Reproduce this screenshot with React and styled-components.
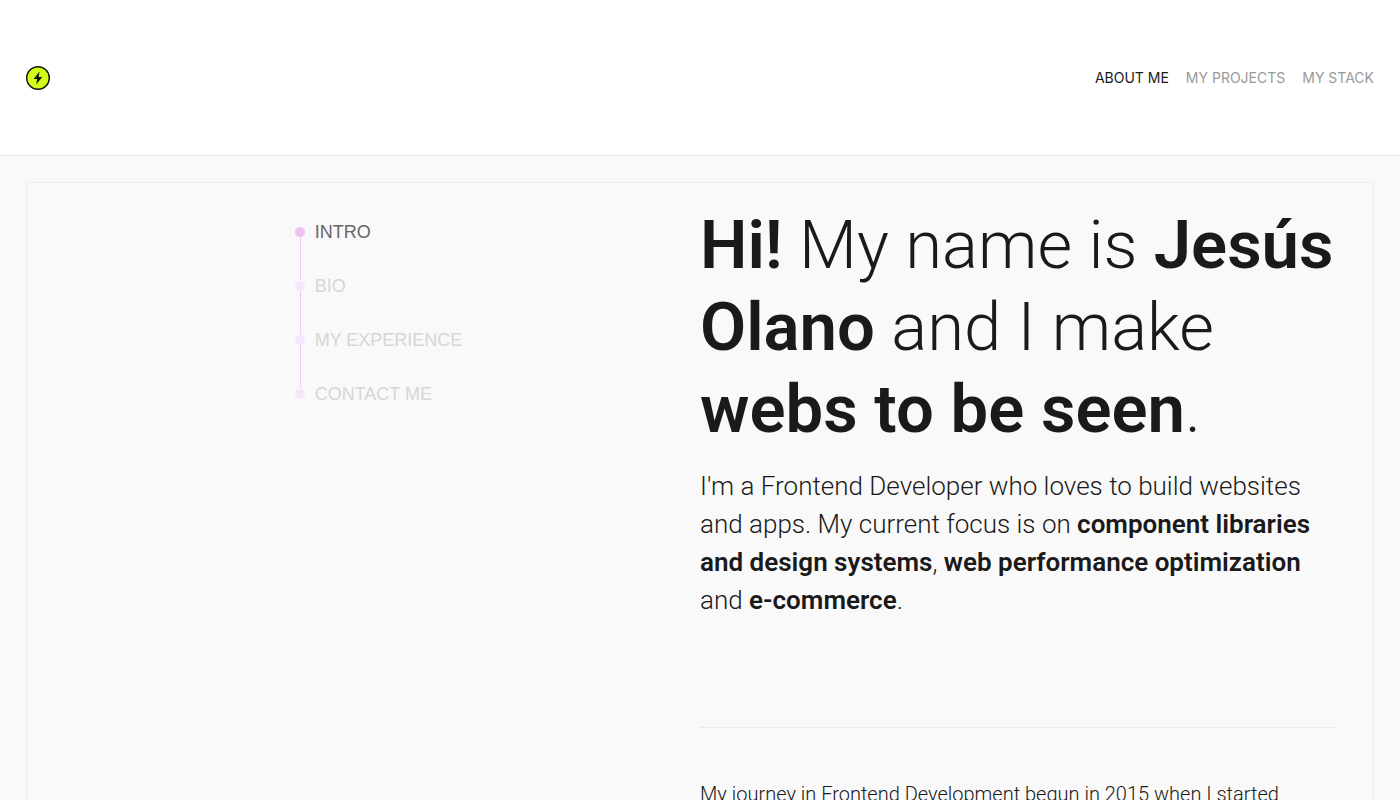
import React from 'react'
import styled, { createGlobalStyle } from 'styled-components'

const steps = [
    { id: 'intro', label: 'Intro' },
    { id: 'bio', label: 'Bio' },
    { id: 'experience', label: 'My experience' },
    { id: 'contact', label: 'Contact me' },
]

const App = () => {
    return (
        <>
            <GlobalStyle />
            <Header>
                <Logo href="#" aria-label="Home">
                    <Bolt />
                </Logo>
                <Nav>
                    <NavLink href="#about" $active>About me</NavLink>
                    <NavLink href="#projects">My projects</NavLink>
                    <NavLink href="#stack">My stack</NavLink>
                </Nav>
            </Header>

            <Main>
                <Panel>
                    <Left>
                        <Steps>
                            {steps.map((step, i) => (
                                <Step key={step.id}>
                                    <StepLink href={`#${step.id}`} $active={i === 0}>
                                        <Dot $active={i === 0} />
                                        {step.label}
                                    </StepLink>
                                    {i < steps.length - 1 && <Line />}
                                </Step>
                            ))}
                        </Steps>
                    </Left>

                    <Right>
                        <Title id="intro">
                            <b>Hi!</b> My name is <b>Jesús Olano</b> and I make <b>webs to be seen</b>.
                        </Title>
                        <Lead>
                            I'm a Frontend Developer who loves to build websites and apps. My
                            current focus is on <b>component libraries and design systems</b>,{' '}
                            <b>web performance optimization</b> and <b>e-commerce</b>.
                        </Lead>
                        <Divider />
                        <Text id="bio">
                            My journey in Frontend Development begun in 2015 when I started
                        </Text>
                    </Right>
                </Panel>
            </Main>
        </>
    )
}

export default App

const Bolt = () => (
    <svg width="24" height="24" viewBox="0 0 24 24" aria-hidden="true">
        <circle cx="12" cy="12" r="11.3" fill="#d0ff14" stroke="#111" strokeWidth="1.4" />
        <path d="M13.6 5.6 7.6 12.9h3.6l-1 5.5 6-7.4h-3.6z" fill="#111" />
    </svg>
)

const GlobalStyle = createGlobalStyle`
    * {
        box-sizing: border-box;
    }
    body {
        margin: 0;
        background: #f9f9f9;
        color: #1a1a1a;
        font-family: Roboto, 'Liberation Sans', sans-serif;
        font-weight: 300;
    }
    a {
        text-decoration: none;
    }
`

const Header = styled.header`
    display: flex;
    align-items: center;
    justify-content: space-between;
    height: 156px;
    padding: 0 26px;
    background: #fff;
    border-bottom: 1px solid #ebebeb;
`

const Logo = styled.a`
    display: flex;
`

const Nav = styled.nav`
    display: flex;
    gap: 17px;
`

const NavLink = styled.a`
    color: ${({ $active }) => ($active ? '#1a1a1a' : '#999')};
    font-family: Inter, 'Liberation Sans', sans-serif;
    font-size: 14px;
    line-height: 20px;
    font-weight: 400;
    text-transform: uppercase;
`

const Main = styled.main`
    padding: 26px;
`

const Panel = styled.section`
    display: grid;
    grid-template-columns: 1fr 1fr;
    border: 1px solid #ededed;
`

const Left = styled.aside`
    display: flex;
    justify-content: center;
    padding-top: 36px;
`

const Steps = styled.ol`
    margin: 0;
    padding: 0 0 0 30px;
    list-style: none;
`

const Step = styled.li`
    display: flex;
    flex-direction: column;
`

const StepLink = styled.a`
    display: flex;
    align-items: center;
    gap: 10px;
    height: 26px;
    color: ${({ $active }) => ($active ? '#666' : '#d6d6d6')};
    font-family: 'Liberation Sans', sans-serif;
    font-size: 18px;
    font-weight: 400;
    text-transform: uppercase;
`

const Dot = styled.span`
    width: 10px;
    height: 10px;
    border-radius: 50%;
    background: ${({ $active }) => ($active ? '#efc2f3' : '#f6e6fd')};
`

const Line = styled.span`
    width: 1px;
    height: 44px;
    margin: -8px 0 -8px 5px;
    background: repeating-linear-gradient(#ee9cf5 0 1px, transparent 1px 2px);
`

const Right = styled.div`
    padding: 21px 36px 80px 0;
`

const Title = styled.h1`
    margin: 0;
    font-size: 67px;
    line-height: 82px;
    font-weight: 300;

    b {
        font-weight: 600;
    }
`

const Lead = styled.p`
    margin: 17px 0 0;
    font-size: 26px;
    line-height: 38px;

    b {
        font-weight: 600;
    }
`

const Divider = styled.hr`
    margin: 108px 0 50px;
    border: 0;
    border-top: 1px solid #ebebeb;
`

const Text = styled.p`
    margin: 0;
    font-size: 20px;
    line-height: 32px;
`
